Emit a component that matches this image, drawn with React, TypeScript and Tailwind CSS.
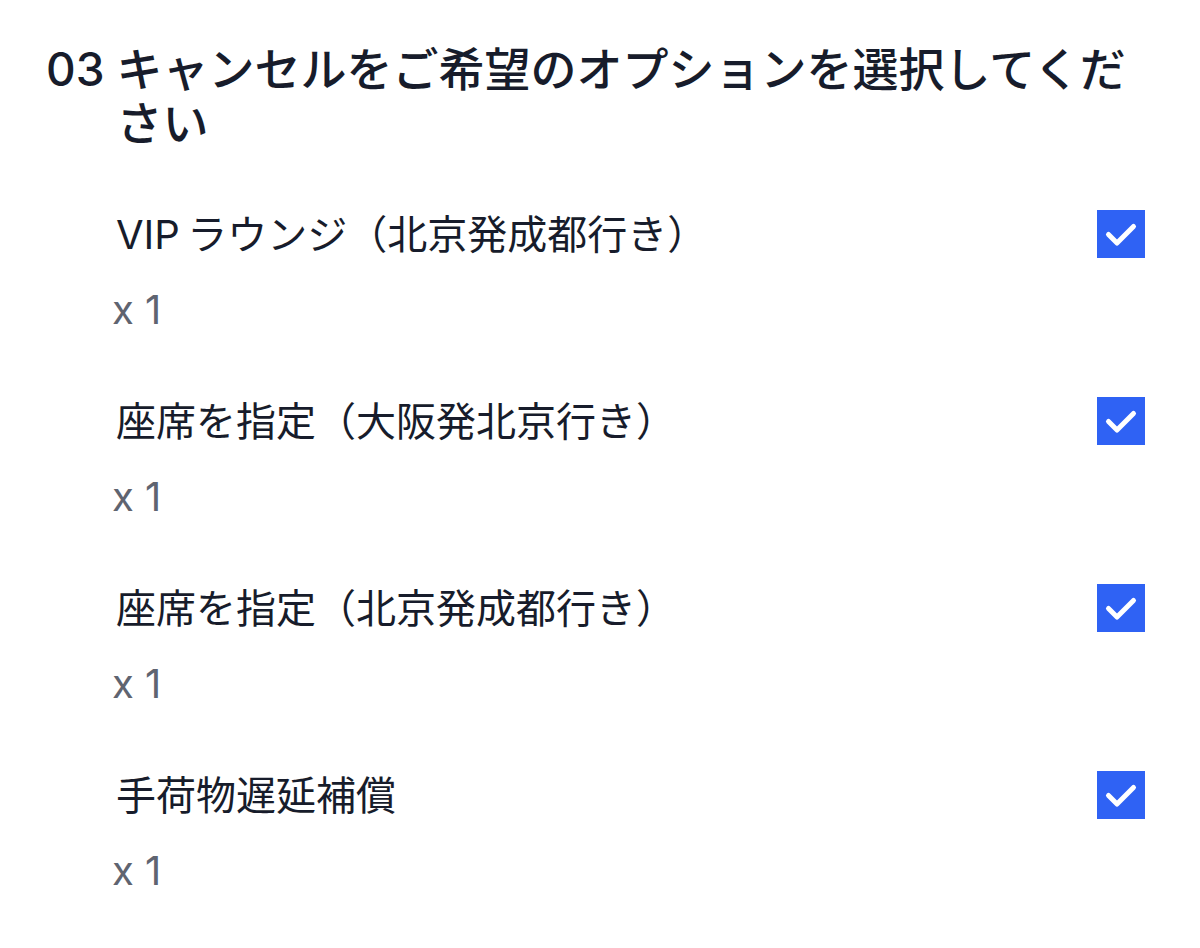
const items = [
  { name: "VIP\u2009ラウンジ（北京発成都行き）", qty: 1 },
  { name: "座席を指定（大阪発北京行き）", qty: 1 },
  { name: "座席を指定（北京発成都行き）", qty: 1 },
  { name: "手荷物遅延補償", qty: 1 },
];

function CheckMark() {
  return (
    <svg viewBox="0 0 48 48" className="h-[48px] w-[48px]" fill="none" aria-hidden>
      <path
        d="M11.5 24.5 20 33 36.5 16.5"
        stroke="white"
        strokeWidth={5}
        strokeLinecap="round"
        strokeLinejoin="round"
      />
    </svg>
  );
}

export default function App() {
  return (
    <div
      className="min-h-screen bg-white pl-[46px] pr-[55px] pt-[42px] text-[#171c2b]"
      style={{ fontFamily: 'Inter, "Noto Sans CJK JP", sans-serif' }}
    >
      <h2 className="flex gap-[12px] text-[46px] font-medium leading-[54px]">
        <span className="shrink-0">03</span>
        <span>キャンセルをご希望のオプションを選択してください</span>
      </h2>

      <ul className="mt-[60px] pl-[70px]">
        {items.map((it, i) => (
          <li key={i} className="flex items-start justify-between pb-[62px]">
            <div>
              <div className="text-[40px] leading-[50px]">{it.name}</div>
              <div className="mt-[25px] -ml-[4px] text-[40px] leading-[50px] text-[#5f6470]">
                x {it.qty}
              </div>
            </div>
            <div className="h-[48px] w-[48px] shrink-0 bg-[#2f62f4]">
              <CheckMark />
            </div>
          </li>
        ))}
      </ul>
    </div>
  );
}
